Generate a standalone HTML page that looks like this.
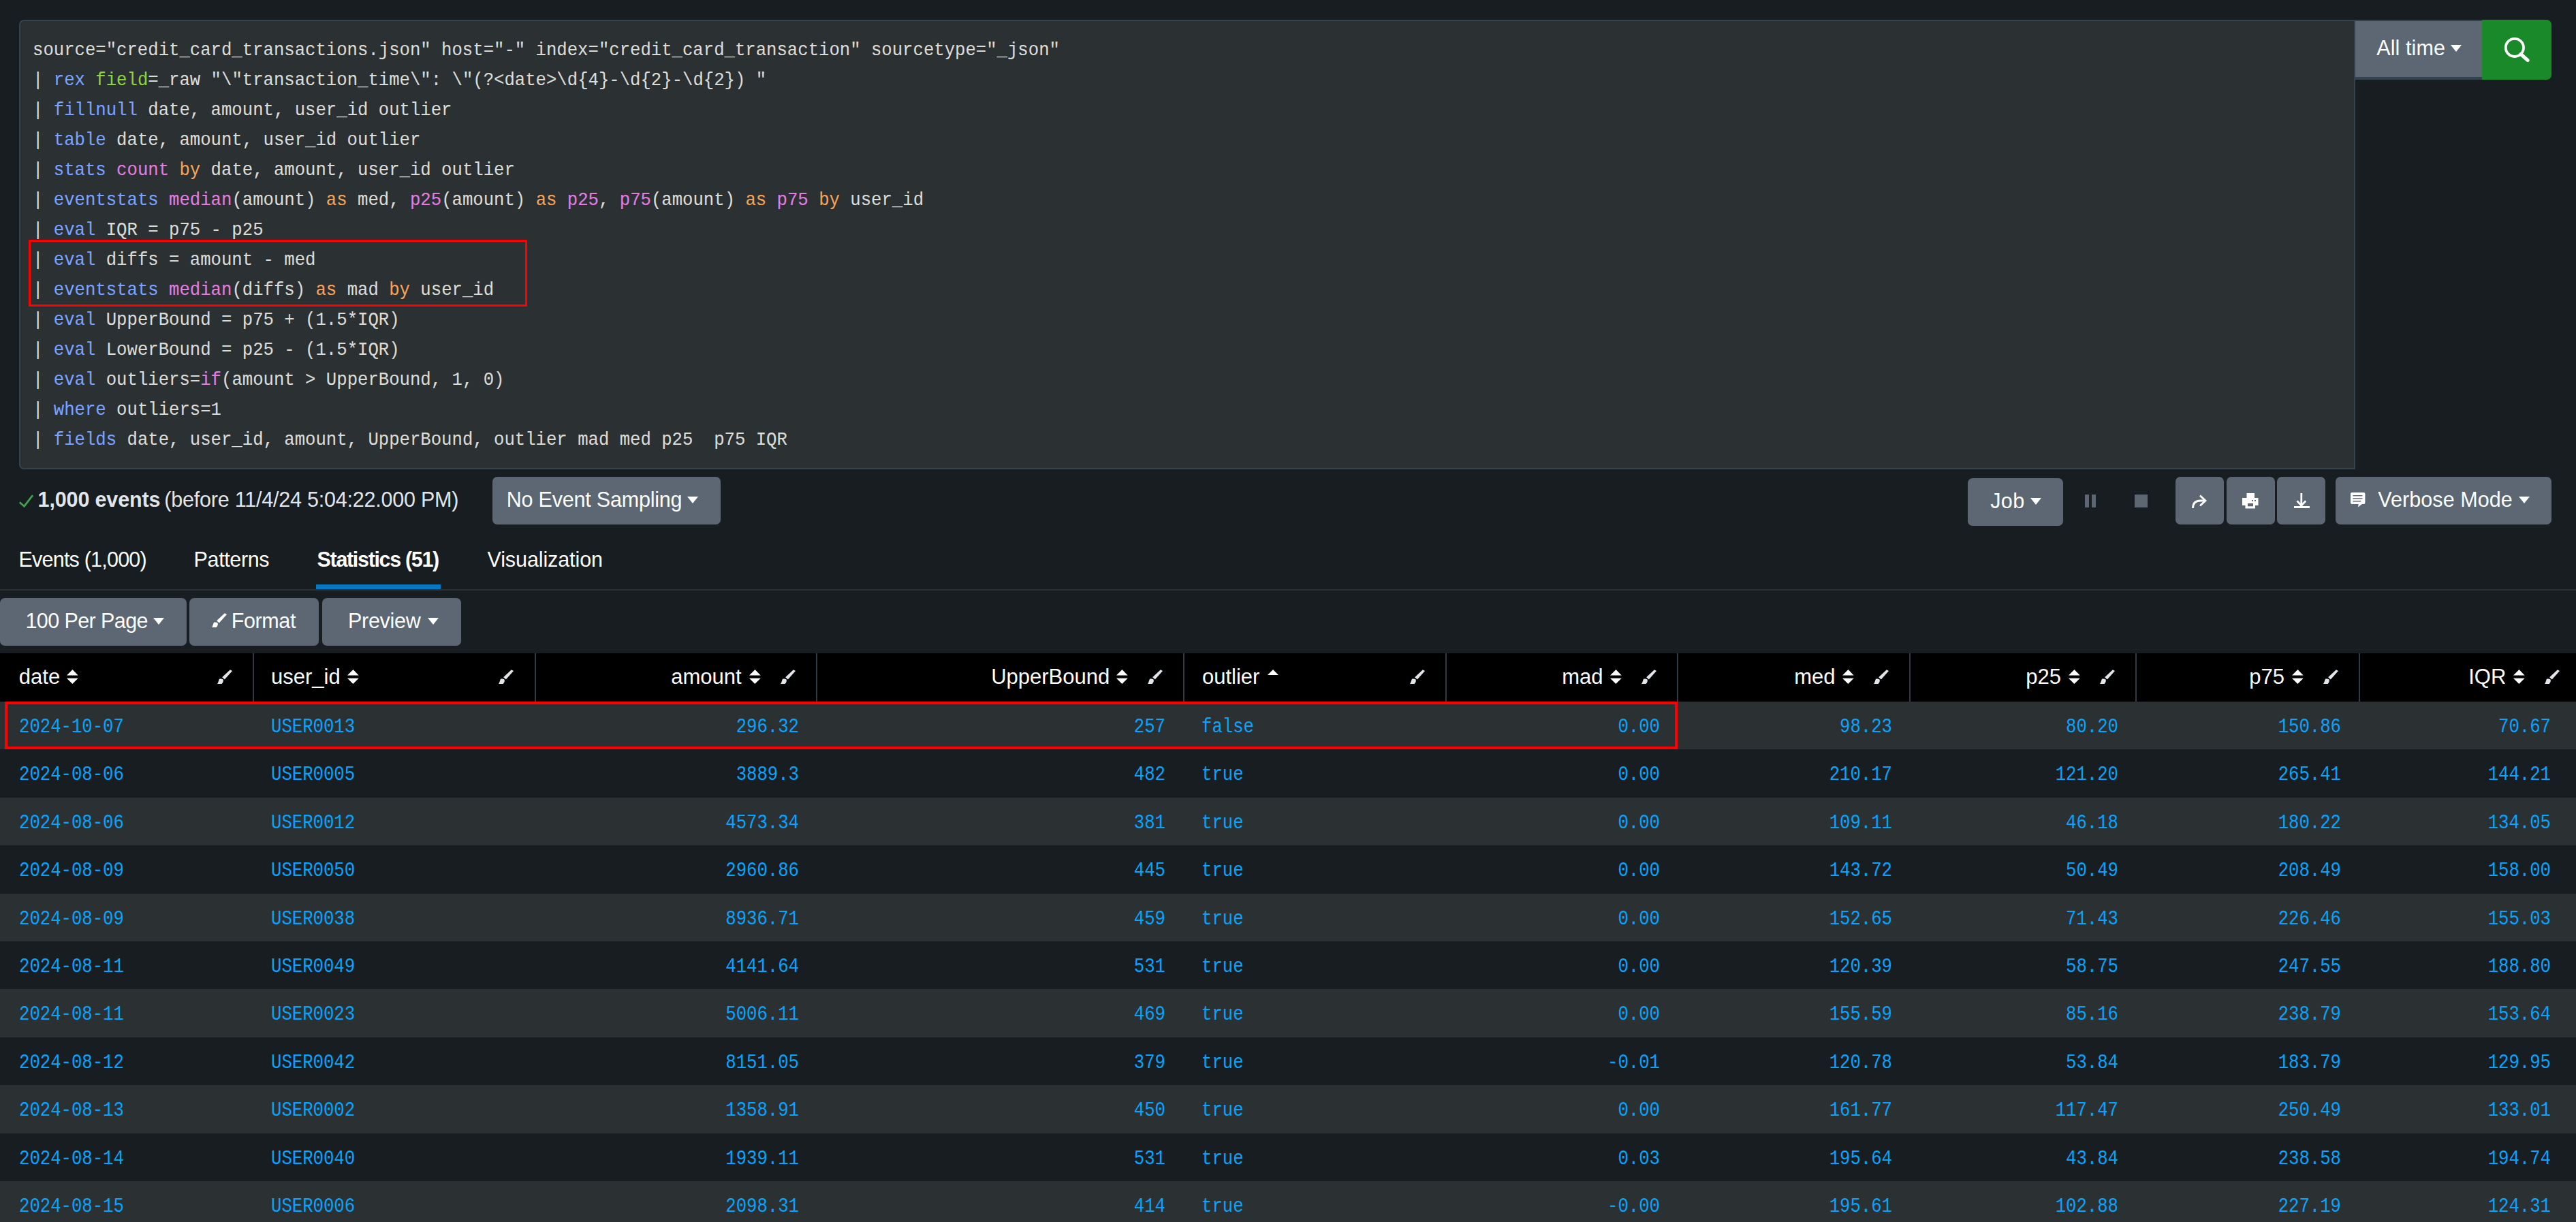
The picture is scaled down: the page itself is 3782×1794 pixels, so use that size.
<!DOCTYPE html><html><head><meta charset="utf-8"><style>
*{margin:0;padding:0;box-sizing:border-box}
html,body{width:3782px;height:1794px;overflow:hidden;background:#171d21}
body{position:relative;font-family:"Liberation Sans", sans-serif;color:#fff}
.a{position:absolute}
.code{position:absolute;left:0;white-space:pre;font-family:"Liberation Mono", monospace;font-size:25.65px;color:#dcdcd7;line-height:44px;height:44px;transform-origin:0 30.8px;transform:scaleY(1.11);-webkit-text-stroke:0.1px currentColor}
.c{color:#7aa3ff} .f{color:#e27de0} .k{color:#f5a35a} .g{color:#8cd43e}
.btn{position:absolute;background:#5c6773;border-radius:7px}
.t{position:absolute;white-space:pre;line-height:40px}
.caret{position:absolute;width:0;height:0;border-left:8.25px solid transparent;border-right:8.25px solid transparent;border-top:10px solid #fff}
.row{position:absolute;left:0;width:3782px}
.cell{position:absolute;white-space:pre;font-family:"Liberation Mono", monospace;font-size:25.65px;line-height:40px;color:#08a4fc}
.div{position:absolute;top:959px;width:2px;height:71px;background:#2f3a44}
</style></head><body>
<div class="a" style="left:28px;top:29px;width:3430px;height:660px;background:#2b3033;border:2px solid #34434f;border-radius:7px 0 0 7px"></div>
<div class="a" style="left:3456px;top:29px;width:188px;height:88px;background:#5c6773;border-top:2px solid #34434f;border-bottom:4px solid #34434f;border-left:2px solid #34434f"></div>
<div class="t" style="left:3489.20px;top:49.83px;font-size:30.5px;font-weight:normal;letter-spacing:0.114px;color:#fff">All time</div>
<div class="caret" style="left:3598px;top:66px"></div>
<div class="a" style="left:3644px;top:29px;width:102px;height:88px;background:#1a8929;border-radius:0 7px 7px 0"></div>
<svg class="a" style="left:3676px;top:53px" width="40" height="40" viewBox="0 0 40 40"><circle cx="15.9" cy="16.9" r="13.1" fill="none" stroke="#fff" stroke-width="3.8"/><line x1="25" y1="26.5" x2="35" y2="35.4" stroke="#fff" stroke-width="5.2" stroke-linecap="round"/></svg>
<div class="a" style="left:48.0px;top:0px;width:3400px;height:700px">
<div class="code" style="top:53.0px">source="credit_card_transactions.json" host="-" index="credit_card_transaction" sourcetype="_json"</div>
<div class="code" style="top:97.0px">| <span class="c">rex</span> <span class="g">field</span>=_raw "\"transaction_time\": \"(?&lt;date&gt;\d{4}-\d{2}-\d{2}) "</div>
<div class="code" style="top:141.0px">| <span class="c">fillnull</span> date, amount, user_id outlier</div>
<div class="code" style="top:185.0px">| <span class="c">table</span> date, amount, user_id outlier</div>
<div class="code" style="top:229.0px">| <span class="c">stats</span> <span class="f">count</span> <span class="k">by</span> date, amount, user_id outlier</div>
<div class="code" style="top:273.0px">| <span class="c">eventstats</span> <span class="f">median</span>(amount) <span class="k">as</span> med, <span class="f">p25</span>(amount) <span class="k">as</span> <span class="f">p25</span>, <span class="f">p75</span>(amount) <span class="k">as</span> <span class="f">p75</span> <span class="k">by</span> user_id</div>
<div class="code" style="top:317.0px">| <span class="c">eval</span> IQR = p75 - p25</div>
<div class="code" style="top:361.0px">| <span class="c">eval</span> diffs = amount - med</div>
<div class="code" style="top:405.0px">| <span class="c">eventstats</span> <span class="f">median</span>(diffs) <span class="k">as</span> mad <span class="k">by</span> user_id</div>
<div class="code" style="top:449.0px">| <span class="c">eval</span> UpperBound = p75 + (1.5*IQR)</div>
<div class="code" style="top:493.0px">| <span class="c">eval</span> LowerBound = p25 - (1.5*IQR)</div>
<div class="code" style="top:537.0px">| <span class="c">eval</span> outliers=<span class="f">if</span>(amount &gt; UpperBound, 1, 0)</div>
<div class="code" style="top:581.0px">| <span class="c">where</span> outliers=1</div>
<div class="code" style="top:625.0px">| <span class="c">fields</span> date, user_id, amount, UpperBound, outlier mad med p25  p75 IQR</div>
</div>
<div class="a" style="left:42px;top:352px;width:732px;height:98px;border:3.5px solid #ff0000"></div>
<svg class="a" style="left:27px;top:724px" width="24" height="22" viewBox="0 0 24 22"><polyline points="1.8,13.4 8.6,19.2 21,3.2" fill="none" stroke="#3fa34d" stroke-width="2.7"/></svg>
<div class="t" style="left:55.60px;top:713.33px;font-size:30.5px;font-weight:bold;letter-spacing:-0.145px;color:#e1e6eb">1,000 events</div>
<div class="t" style="left:241.30px;top:713.33px;font-size:30.5px;font-weight:normal;letter-spacing:-0.217px;color:#e1e6eb">(before 11/4/24 5:04:22.000 PM)</div>
<div class="btn" style="left:723px;top:700px;width:335px;height:70px"></div>
<div class="t" style="left:743.70px;top:713.13px;font-size:30.5px;font-weight:normal;letter-spacing:-0.200px;color:#fff">No Event Sampling</div>
<div class="caret" style="left:1009.3px;top:729px"></div>
<div class="btn" style="left:2889px;top:702px;width:140px;height:70px"></div>
<div class="t" style="left:2922.20px;top:715.03px;font-size:30.5px;font-weight:normal;letter-spacing:0.400px;color:#fff">Job</div>
<div class="caret" style="left:2980.5px;top:731px"></div>
<div class="a" style="left:3060.5px;top:726px;width:6px;height:19px;background:#5c6773"></div>
<div class="a" style="left:3071px;top:726px;width:6px;height:19px;background:#5c6773"></div>
<div class="a" style="left:3134px;top:726px;width:19px;height:19px;background:#5c6773"></div>
<div class="btn" style="left:3194px;top:700px;width:70.5px;height:70px"></div>
<div class="btn" style="left:3269px;top:700px;width:70.5px;height:70px"></div>
<div class="btn" style="left:3343px;top:700px;width:70.5px;height:70px"></div>
<svg class="a" style="left:3216px;top:724.7px" width="26" height="24" viewBox="0 0 26 24"><path d="M3.5 21 C3.5 13 8 10 15 10 L22 10" fill="none" stroke="#fff" stroke-width="2.8"/><polyline points="14,2.5 22,10 14,17.5" fill="none" stroke="#fff" stroke-width="2.8"/></svg>
<svg class="a" style="left:3292px;top:724px" width="24" height="23" viewBox="0 0 24 23"><rect x="6.5" y="0" width="11.5" height="8" fill="#fff"/><rect x="0" y="7" width="23.5" height="11" fill="#fff"/><rect x="4.5" y="14" width="14.5" height="8.5" fill="#fff"/><rect x="8" y="15" width="8" height="4.3" fill="#5c6773"/><rect x="14" y="10" width="2" height="2" fill="#5c6773"/><rect x="18" y="10" width="2" height="2" fill="#5c6773"/></svg>
<svg class="a" style="left:3366.8px;top:723px" width="25" height="24" viewBox="0 0 25 24"><line x1="11.8" y1="1" x2="11.8" y2="20" stroke="#fff" stroke-width="2.8"/><polyline points="5.5,12.5 11.8,19 18.2,12.5" fill="none" stroke="#fff" stroke-width="2.8"/><line x1="1" y1="21.5" x2="24" y2="21.5" stroke="#fff" stroke-width="3"/></svg>
<div class="btn" style="left:3429px;top:700px;width:317px;height:70px"></div>
<svg class="a" style="left:3450.5px;top:723px" width="22" height="22" viewBox="0 0 22 22"><rect x="0" y="0" width="21.4" height="17" rx="2.2" fill="#fff"/><polygon points="11.8,16.5 11,21.6 17.6,16.5" fill="#fff"/><rect x="3.4" y="4" width="14" height="1.4" fill="#5c6773"/><rect x="3.4" y="8.1" width="14" height="1.4" fill="#5c6773"/><rect x="3.4" y="12.2" width="11.9" height="1.4" fill="#5c6773"/></svg>
<div class="t" style="left:3491.30px;top:712.93px;font-size:30.5px;font-weight:normal;letter-spacing:0.064px;color:#fff">Verbose Mode</div>
<div class="caret" style="left:3697.8px;top:729px"></div>
<div class="t" style="left:27.50px;top:801.13px;font-size:30.5px;font-weight:normal;letter-spacing:-0.785px;color:#fff">Events (1,000)</div>
<div class="t" style="left:284.60px;top:801.13px;font-size:30.5px;font-weight:normal;letter-spacing:-0.371px;color:#fff">Patterns</div>
<div class="t" style="left:465.60px;top:801.13px;font-size:30.5px;font-weight:bold;letter-spacing:-1.336px;color:#fff">Statistics (51)</div>
<div class="t" style="left:715.50px;top:801.13px;font-size:30.5px;font-weight:normal;letter-spacing:-0.100px;color:#fff">Visualization</div>
<div class="a" style="left:464px;top:858px;width:183px;height:7px;background:#0877c2"></div>
<div class="a" style="left:0;top:865px;width:3782px;height:2px;background:#2b3033"></div>
<div class="btn" style="left:0px;top:878px;width:274px;height:70px"></div>
<div class="t" style="left:37.40px;top:891.03px;font-size:30.5px;font-weight:normal;letter-spacing:-0.582px;color:#fff">100 Per Page</div>
<div class="caret" style="left:225.3px;top:907px"></div>
<div class="btn" style="left:278px;top:878px;width:190px;height:70px"></div>
<svg class="a" style="left:311px;top:900px" width="23" height="22" viewBox="0 0 23 22"><path d="M18.9 0.2 L22 2.1 L10.8 14.4 L7.1 11.2 Z" fill="#fff"/><path d="M3 13.8 C5 13.3 7 13.5 8.2 14.3 C9.3 15.5 9.2 18.5 6.6 21 L0 21 C1.5 19.5 2 15.5 3 13.8 Z" fill="#fff"/></svg>
<div class="t" style="left:339.80px;top:891.03px;font-size:30.5px;font-weight:normal;letter-spacing:-0.400px;color:#fff">Format</div>
<div class="btn" style="left:473px;top:878px;width:204px;height:70px"></div>
<div class="t" style="left:511.00px;top:891.03px;font-size:30.5px;font-weight:normal;letter-spacing:-0.300px;color:#fff">Preview</div>
<div class="caret" style="left:628.4px;top:907px"></div>
<div class="a" style="left:0;top:959px;width:3782px;height:71px;background:#000000"></div>
<div class="div" style="left:371px"></div>
<div class="div" style="left:784.5px"></div>
<div class="div" style="left:1198px"></div>
<div class="div" style="left:1737px"></div>
<div class="div" style="left:2122px"></div>
<div class="div" style="left:2462px"></div>
<div class="div" style="left:2803px"></div>
<div class="div" style="left:3135px"></div>
<div class="div" style="left:3463px"></div>
<svg class="a" style="left:319px;top:983px" width="23" height="22" viewBox="0 0 23 22"><path d="M18.9 0.2 L22 2.1 L10.8 14.4 L7.1 11.2 Z" fill="#e1e6eb"/><path d="M3 13.8 C5 13.3 7 13.5 8.2 14.3 C9.3 15.5 9.2 18.5 6.6 21 L0 21 C1.5 19.5 2 15.5 3 13.8 Z" fill="#e1e6eb"/></svg>
<div class="t" style="left:27.80px;top:974.26px;font-size:31px">date</div>
<svg class="a" style="left:98.3px;top:983px" width="17" height="21" viewBox="0 0 17 21"><polygon points="8.5,0 16.7,8.5 0,8.5" fill="#fff"/><polygon points="0,12.8 16.7,12.8 8.35,21" fill="#fff"/></svg>
<svg class="a" style="left:732px;top:983px" width="23" height="22" viewBox="0 0 23 22"><path d="M18.9 0.2 L22 2.1 L10.8 14.4 L7.1 11.2 Z" fill="#e1e6eb"/><path d="M3 13.8 C5 13.3 7 13.5 8.2 14.3 C9.3 15.5 9.2 18.5 6.6 21 L0 21 C1.5 19.5 2 15.5 3 13.8 Z" fill="#e1e6eb"/></svg>
<div class="t" style="left:398.00px;top:974.26px;font-size:31px">user_id</div>
<svg class="a" style="left:509.5px;top:983px" width="17" height="21" viewBox="0 0 17 21"><polygon points="8.5,0 16.7,8.5 0,8.5" fill="#fff"/><polygon points="0,12.8 16.7,12.8 8.35,21" fill="#fff"/></svg>
<svg class="a" style="left:1146px;top:983px" width="23" height="22" viewBox="0 0 23 22"><path d="M18.9 0.2 L22 2.1 L10.8 14.4 L7.1 11.2 Z" fill="#e1e6eb"/><path d="M3 13.8 C5 13.3 7 13.5 8.2 14.3 C9.3 15.5 9.2 18.5 6.6 21 L0 21 C1.5 19.5 2 15.5 3 13.8 Z" fill="#e1e6eb"/></svg>
<div class="t" style="left:985.20px;top:974.26px;font-size:31px">amount</div>
<svg class="a" style="left:1099.8px;top:983px" width="17" height="21" viewBox="0 0 17 21"><polygon points="8.5,0 16.7,8.5 0,8.5" fill="#fff"/><polygon points="0,12.8 16.7,12.8 8.35,21" fill="#fff"/></svg>
<svg class="a" style="left:1685px;top:983px" width="23" height="22" viewBox="0 0 23 22"><path d="M18.9 0.2 L22 2.1 L10.8 14.4 L7.1 11.2 Z" fill="#e1e6eb"/><path d="M3 13.8 C5 13.3 7 13.5 8.2 14.3 C9.3 15.5 9.2 18.5 6.6 21 L0 21 C1.5 19.5 2 15.5 3 13.8 Z" fill="#e1e6eb"/></svg>
<div class="t" style="left:1455.20px;top:974.26px;font-size:31px">UpperBound</div>
<svg class="a" style="left:1638.8px;top:983px" width="17" height="21" viewBox="0 0 17 21"><polygon points="8.5,0 16.7,8.5 0,8.5" fill="#fff"/><polygon points="0,12.8 16.7,12.8 8.35,21" fill="#fff"/></svg>
<svg class="a" style="left:2070px;top:983px" width="23" height="22" viewBox="0 0 23 22"><path d="M18.9 0.2 L22 2.1 L10.8 14.4 L7.1 11.2 Z" fill="#e1e6eb"/><path d="M3 13.8 C5 13.3 7 13.5 8.2 14.3 C9.3 15.5 9.2 18.5 6.6 21 L0 21 C1.5 19.5 2 15.5 3 13.8 Z" fill="#e1e6eb"/></svg>
<div class="t" style="left:1765.00px;top:974.26px;font-size:31px">outlier</div>
<svg class="a" style="left:1860.5px;top:983px" width="17" height="9" viewBox="0 0 17 9"><polygon points="8,0 16,8 0,8" fill="#fff"/></svg>
<svg class="a" style="left:2410px;top:983px" width="23" height="22" viewBox="0 0 23 22"><path d="M18.9 0.2 L22 2.1 L10.8 14.4 L7.1 11.2 Z" fill="#e1e6eb"/><path d="M3 13.8 C5 13.3 7 13.5 8.2 14.3 C9.3 15.5 9.2 18.5 6.6 21 L0 21 C1.5 19.5 2 15.5 3 13.8 Z" fill="#e1e6eb"/></svg>
<div class="t" style="left:2293.20px;top:974.26px;font-size:31px">mad</div>
<svg class="a" style="left:2363.8px;top:983px" width="17" height="21" viewBox="0 0 17 21"><polygon points="8.5,0 16.7,8.5 0,8.5" fill="#fff"/><polygon points="0,12.8 16.7,12.8 8.35,21" fill="#fff"/></svg>
<svg class="a" style="left:2751px;top:983px" width="23" height="22" viewBox="0 0 23 22"><path d="M18.9 0.2 L22 2.1 L10.8 14.4 L7.1 11.2 Z" fill="#e1e6eb"/><path d="M3 13.8 C5 13.3 7 13.5 8.2 14.3 C9.3 15.5 9.2 18.5 6.6 21 L0 21 C1.5 19.5 2 15.5 3 13.8 Z" fill="#e1e6eb"/></svg>
<div class="t" style="left:2634.20px;top:974.26px;font-size:31px">med</div>
<svg class="a" style="left:2704.8px;top:983px" width="17" height="21" viewBox="0 0 17 21"><polygon points="8.5,0 16.7,8.5 0,8.5" fill="#fff"/><polygon points="0,12.8 16.7,12.8 8.35,21" fill="#fff"/></svg>
<svg class="a" style="left:3083px;top:983px" width="23" height="22" viewBox="0 0 23 22"><path d="M18.9 0.2 L22 2.1 L10.8 14.4 L7.1 11.2 Z" fill="#e1e6eb"/><path d="M3 13.8 C5 13.3 7 13.5 8.2 14.3 C9.3 15.5 9.2 18.5 6.6 21 L0 21 C1.5 19.5 2 15.5 3 13.8 Z" fill="#e1e6eb"/></svg>
<div class="t" style="left:2974.20px;top:974.26px;font-size:31px">p25</div>
<svg class="a" style="left:3036.8px;top:983px" width="17" height="21" viewBox="0 0 17 21"><polygon points="8.5,0 16.7,8.5 0,8.5" fill="#fff"/><polygon points="0,12.8 16.7,12.8 8.35,21" fill="#fff"/></svg>
<svg class="a" style="left:3411px;top:983px" width="23" height="22" viewBox="0 0 23 22"><path d="M18.9 0.2 L22 2.1 L10.8 14.4 L7.1 11.2 Z" fill="#e1e6eb"/><path d="M3 13.8 C5 13.3 7 13.5 8.2 14.3 C9.3 15.5 9.2 18.5 6.6 21 L0 21 C1.5 19.5 2 15.5 3 13.8 Z" fill="#e1e6eb"/></svg>
<div class="t" style="left:3302.20px;top:974.26px;font-size:31px">p75</div>
<svg class="a" style="left:3364.8px;top:983px" width="17" height="21" viewBox="0 0 17 21"><polygon points="8.5,0 16.7,8.5 0,8.5" fill="#fff"/><polygon points="0,12.8 16.7,12.8 8.35,21" fill="#fff"/></svg>
<svg class="a" style="left:3736px;top:983px" width="23" height="22" viewBox="0 0 23 22"><path d="M18.9 0.2 L22 2.1 L10.8 14.4 L7.1 11.2 Z" fill="#e1e6eb"/><path d="M3 13.8 C5 13.3 7 13.5 8.2 14.3 C9.3 15.5 9.2 18.5 6.6 21 L0 21 C1.5 19.5 2 15.5 3 13.8 Z" fill="#e1e6eb"/></svg>
<div class="t" style="left:3624.20px;top:974.26px;font-size:31px">IQR</div>
<svg class="a" style="left:3689.8px;top:983px" width="17" height="21" viewBox="0 0 17 21"><polygon points="8.5,0 16.7,8.5 0,8.5" fill="#fff"/><polygon points="0,12.8 16.7,12.8 8.35,21" fill="#fff"/></svg>
<div class="row" style="top:1030.00px;height:70.4px;background:#2b3033">
<div class="cell" style="left:28.0px;top:19.0px;transform-origin:0 27px;transform:scaleY(1.15)">2024-10-07</div>
<div class="cell" style="left:398.0px;top:19.0px;transform-origin:0 27px;transform:scaleY(1.15)">USER0013</div>
<div class="cell" style="right:2609px;top:19.0px;transform-origin:100% 27px;transform:scaleY(1.15)">296.32</div>
<div class="cell" style="right:2071px;top:19.0px;transform-origin:100% 27px;transform:scaleY(1.15)">257</div>
<div class="cell" style="left:1764.0px;top:19.0px;transform-origin:0 27px;transform:scaleY(1.15)">false</div>
<div class="cell" style="right:1345px;top:19.0px;transform-origin:100% 27px;transform:scaleY(1.15)">0.00</div>
<div class="cell" style="right:1004px;top:19.0px;transform-origin:100% 27px;transform:scaleY(1.15)">98.23</div>
<div class="cell" style="right:672px;top:19.0px;transform-origin:100% 27px;transform:scaleY(1.15)">80.20</div>
<div class="cell" style="right:345px;top:19.0px;transform-origin:100% 27px;transform:scaleY(1.15)">150.86</div>
<div class="cell" style="right:37px;top:19.0px;transform-origin:100% 27px;transform:scaleY(1.15)">70.67</div>
</div>
<div class="row" style="top:1100.40px;height:70.4px;background:#171d21">
<div class="cell" style="left:28.0px;top:19.0px;transform-origin:0 27px;transform:scaleY(1.15)">2024-08-06</div>
<div class="cell" style="left:398.0px;top:19.0px;transform-origin:0 27px;transform:scaleY(1.15)">USER0005</div>
<div class="cell" style="right:2609px;top:19.0px;transform-origin:100% 27px;transform:scaleY(1.15)">3889.3</div>
<div class="cell" style="right:2071px;top:19.0px;transform-origin:100% 27px;transform:scaleY(1.15)">482</div>
<div class="cell" style="left:1764.0px;top:19.0px;transform-origin:0 27px;transform:scaleY(1.15)">true</div>
<div class="cell" style="right:1345px;top:19.0px;transform-origin:100% 27px;transform:scaleY(1.15)">0.00</div>
<div class="cell" style="right:1004px;top:19.0px;transform-origin:100% 27px;transform:scaleY(1.15)">210.17</div>
<div class="cell" style="right:672px;top:19.0px;transform-origin:100% 27px;transform:scaleY(1.15)">121.20</div>
<div class="cell" style="right:345px;top:19.0px;transform-origin:100% 27px;transform:scaleY(1.15)">265.41</div>
<div class="cell" style="right:37px;top:19.0px;transform-origin:100% 27px;transform:scaleY(1.15)">144.21</div>
</div>
<div class="row" style="top:1170.80px;height:70.4px;background:#2b3033">
<div class="cell" style="left:28.0px;top:19.0px;transform-origin:0 27px;transform:scaleY(1.15)">2024-08-06</div>
<div class="cell" style="left:398.0px;top:19.0px;transform-origin:0 27px;transform:scaleY(1.15)">USER0012</div>
<div class="cell" style="right:2609px;top:19.0px;transform-origin:100% 27px;transform:scaleY(1.15)">4573.34</div>
<div class="cell" style="right:2071px;top:19.0px;transform-origin:100% 27px;transform:scaleY(1.15)">381</div>
<div class="cell" style="left:1764.0px;top:19.0px;transform-origin:0 27px;transform:scaleY(1.15)">true</div>
<div class="cell" style="right:1345px;top:19.0px;transform-origin:100% 27px;transform:scaleY(1.15)">0.00</div>
<div class="cell" style="right:1004px;top:19.0px;transform-origin:100% 27px;transform:scaleY(1.15)">109.11</div>
<div class="cell" style="right:672px;top:19.0px;transform-origin:100% 27px;transform:scaleY(1.15)">46.18</div>
<div class="cell" style="right:345px;top:19.0px;transform-origin:100% 27px;transform:scaleY(1.15)">180.22</div>
<div class="cell" style="right:37px;top:19.0px;transform-origin:100% 27px;transform:scaleY(1.15)">134.05</div>
</div>
<div class="row" style="top:1241.20px;height:70.4px;background:#171d21">
<div class="cell" style="left:28.0px;top:19.0px;transform-origin:0 27px;transform:scaleY(1.15)">2024-08-09</div>
<div class="cell" style="left:398.0px;top:19.0px;transform-origin:0 27px;transform:scaleY(1.15)">USER0050</div>
<div class="cell" style="right:2609px;top:19.0px;transform-origin:100% 27px;transform:scaleY(1.15)">2960.86</div>
<div class="cell" style="right:2071px;top:19.0px;transform-origin:100% 27px;transform:scaleY(1.15)">445</div>
<div class="cell" style="left:1764.0px;top:19.0px;transform-origin:0 27px;transform:scaleY(1.15)">true</div>
<div class="cell" style="right:1345px;top:19.0px;transform-origin:100% 27px;transform:scaleY(1.15)">0.00</div>
<div class="cell" style="right:1004px;top:19.0px;transform-origin:100% 27px;transform:scaleY(1.15)">143.72</div>
<div class="cell" style="right:672px;top:19.0px;transform-origin:100% 27px;transform:scaleY(1.15)">50.49</div>
<div class="cell" style="right:345px;top:19.0px;transform-origin:100% 27px;transform:scaleY(1.15)">208.49</div>
<div class="cell" style="right:37px;top:19.0px;transform-origin:100% 27px;transform:scaleY(1.15)">158.00</div>
</div>
<div class="row" style="top:1311.60px;height:70.4px;background:#2b3033">
<div class="cell" style="left:28.0px;top:19.0px;transform-origin:0 27px;transform:scaleY(1.15)">2024-08-09</div>
<div class="cell" style="left:398.0px;top:19.0px;transform-origin:0 27px;transform:scaleY(1.15)">USER0038</div>
<div class="cell" style="right:2609px;top:19.0px;transform-origin:100% 27px;transform:scaleY(1.15)">8936.71</div>
<div class="cell" style="right:2071px;top:19.0px;transform-origin:100% 27px;transform:scaleY(1.15)">459</div>
<div class="cell" style="left:1764.0px;top:19.0px;transform-origin:0 27px;transform:scaleY(1.15)">true</div>
<div class="cell" style="right:1345px;top:19.0px;transform-origin:100% 27px;transform:scaleY(1.15)">0.00</div>
<div class="cell" style="right:1004px;top:19.0px;transform-origin:100% 27px;transform:scaleY(1.15)">152.65</div>
<div class="cell" style="right:672px;top:19.0px;transform-origin:100% 27px;transform:scaleY(1.15)">71.43</div>
<div class="cell" style="right:345px;top:19.0px;transform-origin:100% 27px;transform:scaleY(1.15)">226.46</div>
<div class="cell" style="right:37px;top:19.0px;transform-origin:100% 27px;transform:scaleY(1.15)">155.03</div>
</div>
<div class="row" style="top:1382.00px;height:70.4px;background:#171d21">
<div class="cell" style="left:28.0px;top:19.0px;transform-origin:0 27px;transform:scaleY(1.15)">2024-08-11</div>
<div class="cell" style="left:398.0px;top:19.0px;transform-origin:0 27px;transform:scaleY(1.15)">USER0049</div>
<div class="cell" style="right:2609px;top:19.0px;transform-origin:100% 27px;transform:scaleY(1.15)">4141.64</div>
<div class="cell" style="right:2071px;top:19.0px;transform-origin:100% 27px;transform:scaleY(1.15)">531</div>
<div class="cell" style="left:1764.0px;top:19.0px;transform-origin:0 27px;transform:scaleY(1.15)">true</div>
<div class="cell" style="right:1345px;top:19.0px;transform-origin:100% 27px;transform:scaleY(1.15)">0.00</div>
<div class="cell" style="right:1004px;top:19.0px;transform-origin:100% 27px;transform:scaleY(1.15)">120.39</div>
<div class="cell" style="right:672px;top:19.0px;transform-origin:100% 27px;transform:scaleY(1.15)">58.75</div>
<div class="cell" style="right:345px;top:19.0px;transform-origin:100% 27px;transform:scaleY(1.15)">247.55</div>
<div class="cell" style="right:37px;top:19.0px;transform-origin:100% 27px;transform:scaleY(1.15)">188.80</div>
</div>
<div class="row" style="top:1452.40px;height:70.4px;background:#2b3033">
<div class="cell" style="left:28.0px;top:19.0px;transform-origin:0 27px;transform:scaleY(1.15)">2024-08-11</div>
<div class="cell" style="left:398.0px;top:19.0px;transform-origin:0 27px;transform:scaleY(1.15)">USER0023</div>
<div class="cell" style="right:2609px;top:19.0px;transform-origin:100% 27px;transform:scaleY(1.15)">5006.11</div>
<div class="cell" style="right:2071px;top:19.0px;transform-origin:100% 27px;transform:scaleY(1.15)">469</div>
<div class="cell" style="left:1764.0px;top:19.0px;transform-origin:0 27px;transform:scaleY(1.15)">true</div>
<div class="cell" style="right:1345px;top:19.0px;transform-origin:100% 27px;transform:scaleY(1.15)">0.00</div>
<div class="cell" style="right:1004px;top:19.0px;transform-origin:100% 27px;transform:scaleY(1.15)">155.59</div>
<div class="cell" style="right:672px;top:19.0px;transform-origin:100% 27px;transform:scaleY(1.15)">85.16</div>
<div class="cell" style="right:345px;top:19.0px;transform-origin:100% 27px;transform:scaleY(1.15)">238.79</div>
<div class="cell" style="right:37px;top:19.0px;transform-origin:100% 27px;transform:scaleY(1.15)">153.64</div>
</div>
<div class="row" style="top:1522.80px;height:70.4px;background:#171d21">
<div class="cell" style="left:28.0px;top:19.0px;transform-origin:0 27px;transform:scaleY(1.15)">2024-08-12</div>
<div class="cell" style="left:398.0px;top:19.0px;transform-origin:0 27px;transform:scaleY(1.15)">USER0042</div>
<div class="cell" style="right:2609px;top:19.0px;transform-origin:100% 27px;transform:scaleY(1.15)">8151.05</div>
<div class="cell" style="right:2071px;top:19.0px;transform-origin:100% 27px;transform:scaleY(1.15)">379</div>
<div class="cell" style="left:1764.0px;top:19.0px;transform-origin:0 27px;transform:scaleY(1.15)">true</div>
<div class="cell" style="right:1345px;top:19.0px;transform-origin:100% 27px;transform:scaleY(1.15)">-0.01</div>
<div class="cell" style="right:1004px;top:19.0px;transform-origin:100% 27px;transform:scaleY(1.15)">120.78</div>
<div class="cell" style="right:672px;top:19.0px;transform-origin:100% 27px;transform:scaleY(1.15)">53.84</div>
<div class="cell" style="right:345px;top:19.0px;transform-origin:100% 27px;transform:scaleY(1.15)">183.79</div>
<div class="cell" style="right:37px;top:19.0px;transform-origin:100% 27px;transform:scaleY(1.15)">129.95</div>
</div>
<div class="row" style="top:1593.20px;height:70.4px;background:#2b3033">
<div class="cell" style="left:28.0px;top:19.0px;transform-origin:0 27px;transform:scaleY(1.15)">2024-08-13</div>
<div class="cell" style="left:398.0px;top:19.0px;transform-origin:0 27px;transform:scaleY(1.15)">USER0002</div>
<div class="cell" style="right:2609px;top:19.0px;transform-origin:100% 27px;transform:scaleY(1.15)">1358.91</div>
<div class="cell" style="right:2071px;top:19.0px;transform-origin:100% 27px;transform:scaleY(1.15)">450</div>
<div class="cell" style="left:1764.0px;top:19.0px;transform-origin:0 27px;transform:scaleY(1.15)">true</div>
<div class="cell" style="right:1345px;top:19.0px;transform-origin:100% 27px;transform:scaleY(1.15)">0.00</div>
<div class="cell" style="right:1004px;top:19.0px;transform-origin:100% 27px;transform:scaleY(1.15)">161.77</div>
<div class="cell" style="right:672px;top:19.0px;transform-origin:100% 27px;transform:scaleY(1.15)">117.47</div>
<div class="cell" style="right:345px;top:19.0px;transform-origin:100% 27px;transform:scaleY(1.15)">250.49</div>
<div class="cell" style="right:37px;top:19.0px;transform-origin:100% 27px;transform:scaleY(1.15)">133.01</div>
</div>
<div class="row" style="top:1663.60px;height:70.4px;background:#171d21">
<div class="cell" style="left:28.0px;top:19.0px;transform-origin:0 27px;transform:scaleY(1.15)">2024-08-14</div>
<div class="cell" style="left:398.0px;top:19.0px;transform-origin:0 27px;transform:scaleY(1.15)">USER0040</div>
<div class="cell" style="right:2609px;top:19.0px;transform-origin:100% 27px;transform:scaleY(1.15)">1939.11</div>
<div class="cell" style="right:2071px;top:19.0px;transform-origin:100% 27px;transform:scaleY(1.15)">531</div>
<div class="cell" style="left:1764.0px;top:19.0px;transform-origin:0 27px;transform:scaleY(1.15)">true</div>
<div class="cell" style="right:1345px;top:19.0px;transform-origin:100% 27px;transform:scaleY(1.15)">0.03</div>
<div class="cell" style="right:1004px;top:19.0px;transform-origin:100% 27px;transform:scaleY(1.15)">195.64</div>
<div class="cell" style="right:672px;top:19.0px;transform-origin:100% 27px;transform:scaleY(1.15)">43.84</div>
<div class="cell" style="right:345px;top:19.0px;transform-origin:100% 27px;transform:scaleY(1.15)">238.58</div>
<div class="cell" style="right:37px;top:19.0px;transform-origin:100% 27px;transform:scaleY(1.15)">194.74</div>
</div>
<div class="row" style="top:1734.00px;height:70.4px;background:#2b3033">
<div class="cell" style="left:28.0px;top:19.0px;transform-origin:0 27px;transform:scaleY(1.15)">2024-08-15</div>
<div class="cell" style="left:398.0px;top:19.0px;transform-origin:0 27px;transform:scaleY(1.15)">USER0006</div>
<div class="cell" style="right:2609px;top:19.0px;transform-origin:100% 27px;transform:scaleY(1.15)">2098.31</div>
<div class="cell" style="right:2071px;top:19.0px;transform-origin:100% 27px;transform:scaleY(1.15)">414</div>
<div class="cell" style="left:1764.0px;top:19.0px;transform-origin:0 27px;transform:scaleY(1.15)">true</div>
<div class="cell" style="right:1345px;top:19.0px;transform-origin:100% 27px;transform:scaleY(1.15)">-0.00</div>
<div class="cell" style="right:1004px;top:19.0px;transform-origin:100% 27px;transform:scaleY(1.15)">195.61</div>
<div class="cell" style="right:672px;top:19.0px;transform-origin:100% 27px;transform:scaleY(1.15)">102.88</div>
<div class="cell" style="right:345px;top:19.0px;transform-origin:100% 27px;transform:scaleY(1.15)">227.19</div>
<div class="cell" style="right:37px;top:19.0px;transform-origin:100% 27px;transform:scaleY(1.15)">124.31</div>
</div>
<div class="a" style="left:7px;top:1030px;width:2456px;height:70px;border:4px solid #ff0000"></div>
</body></html>
